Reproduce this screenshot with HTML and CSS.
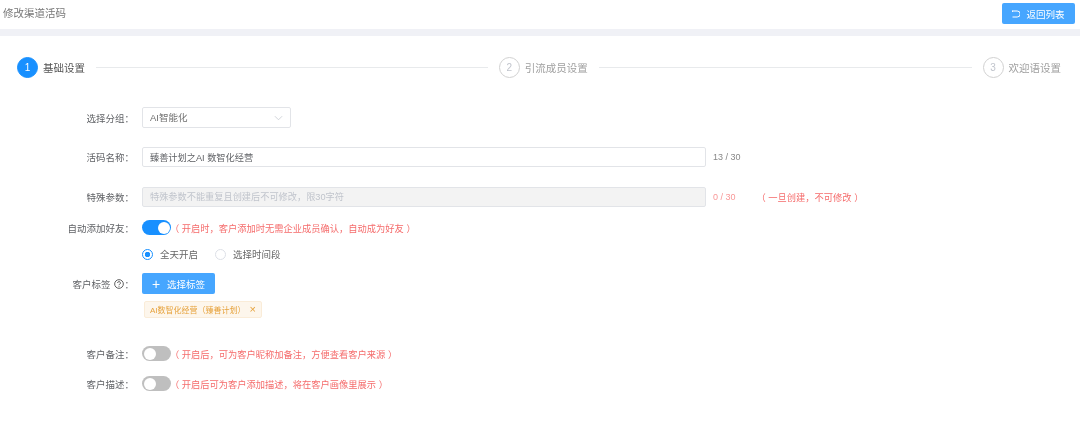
FILE: index.html
```html
<!doctype html>
<html lang="zh-CN">
  <head>
    <meta charset="UTF-8" />
    <title>修改渠道活码</title>
    <link rel="stylesheet" href="styles.css">
  </head>
  <body>
    <header class="topbar">
      <span class="page-title">修改渠道活码</span>
      <button class="btn btn-back">
        <svg class="icon-back" viewBox="0 0 8 8"><path d="M.5 .5v1.4M.5 1h4.7a2.6 2.6 0 0 1 0 6H.5" /></svg>
        返回列表
      </button>
    </header>

    <main class="panel">
      <div class="steps">
        <div class="step active"><span class="step-num">1</span><span class="step-label">基础设置</span></div>
        <div class="step-line line-first"></div>
        <div class="step"><span class="step-num">2</span><span class="step-label">引流成员设置</span></div>
        <div class="step-line line-second"></div>
        <div class="step"><span class="step-num">3</span><span class="step-label">欢迎语设置</span></div>
      </div>

      <form class="form">
        <div class="row row-group">
          <label class="label">选择分组：</label>
          <div class="select">AI智能化
            <svg class="chevron" viewBox="0 0 10 6"><path d="M1 1l4 4 4-4" /></svg>
          </div>
        </div>

        <div class="row row-name">
          <label class="label">活码名称：</label>
          <input class="input" type="text" value="臻善计划之AI 数智化经营" />
          <span class="count">13 / 30</span>
        </div>

        <div class="row row-param">
          <label class="label">特殊参数：</label>
          <input class="input" type="text" disabled placeholder="特殊参数不能重复且创建后不可修改，限30字符" />
          <span class="count count-red">0 / 30</span>
          <span class="hint hint-once">（ 一旦创建，不可修改 ）</span>
        </div>

        <div class="row row-auto">
          <label class="label">自动添加好友：</label>
          <span class="switch on"></span>
          <span class="hint">（ 开启时，客户添加时无需企业成员确认，自动成为好友 ）</span>
        </div>

        <div class="row row-radio">
          <span class="label"></span>
          <span class="radio checked"></span><span class="radio-text">全天开启</span>
          <span class="radio radio-second"></span><span class="radio-text">选择时间段</span>
        </div>

        <div class="row row-tags">
          <label class="label">客户标签
            <svg class="icon-help" viewBox="0 0 12 12">
              <circle cx="6" cy="6" r="5.2" />
              <path d="M4.3 4.8a1.7 1.7 0 1 1 2.5 1.5c-.6.3-.8.6-.8 1.1" />
              <path d="M6 8.3v1" />
            </svg>：</label>
          <button class="btn btn-tag" type="button"><span class="plus">+</span>选择标签</button>
        </div>

        <div class="row row-taglist">
          <span class="label"></span>
          <span class="tag">AI数智化经营（臻善计划）<span class="tag-close">×</span></span>
        </div>

        <div class="row row-remark">
          <label class="label">客户备注：</label>
          <span class="switch"></span>
          <span class="hint">（ 开启后，可为客户昵称加备注，方便查看客户来源 ）</span>
        </div>

        <div class="row row-desc">
          <label class="label">客户描述：</label>
          <span class="switch"></span>
          <span class="hint">（ 开启后可为客户添加描述，将在客户画像里展示 ）</span>
        </div>
      </form>
    </main>
  </body>
</html>
```

FILE: styles.css
```css
* {
  box-sizing: border-box;
}

html,
body {
  height: 100%;
}

body {
  margin: 0;
  background: #fff;
  color: #606266;
  font-family: "Liberation Sans", "Noto Sans CJK SC", sans-serif;
  font-size: 10px;
  overflow: hidden;
  filter: blur(0.35px);
}

.topbar {
  display: flex;
  align-items: flex-start;
  justify-content: space-between;
  height: 36px;
  padding: 3px 5px 0 3px;
  border-bottom: 7px solid #f0f1f6;
}

.page-title {
  font-size: 10.5px;
  line-height: 20px;
  color: #777;
}

.btn {
  display: inline-flex;
  align-items: center;
  justify-content: center;
  flex: none;
  width: 73px;
  height: 21px;
  padding: 0;
  border: 0;
  border-radius: 2px;
  background: #46a6ff;
  color: #fff;
  font-family: inherit;
  font-size: 9.5px;
  white-space: nowrap;
}

.icon-back {
  width: 8px;
  height: 8px;
  margin-right: 6px;
  fill: none;
  stroke: #fff;
  stroke-width: 1;
}

.steps {
  display: flex;
  align-items: center;
  padding: 21px 19px 0 17px;
}

.step {
  display: flex;
  align-items: center;
  color: #a0a0a0;
  font-size: 10.5px;
}

.step-num {
  display: flex;
  align-items: center;
  justify-content: center;
  width: 21px;
  height: 21px;
  margin-right: 5px;
  border: 1px solid #d0d0d0;
  border-radius: 50%;
  color: #c0c4cc;
  font-size: 10px;
}

.step.active {
  color: #555;
}

.step.active .step-num {
  border-color: #1890ff;
  background: #1890ff;
  color: #fff;
}

.step-line {
  height: 1px;
  margin: 0 11px;
  background: #e8eaec;
}

.line-first {
  flex: 391;
}

.line-second {
  flex: 372;
}

.form {
  padding-top: 29px;
}

.row {
  display: flex;
  align-items: center;
}

.label {
  display: flex;
  align-items: center;
  justify-content: flex-end;
  flex: none;
  width: 134px;
  margin-right: 8px;
  color: #606266;
  font-size: 9.5px;
}

.row-group { height: 21px; }
.row-name { height: 20px; margin-top: 19px; }
.row-param { height: 20px; margin-top: 20px; }
.row-auto { height: 15px; margin-top: 13px; }
.row-radio { height: 16px; margin-top: 11px; }
.row-tags { height: 21px; margin-top: 11px; }
.row-taglist { height: 17px; margin-top: 7px; }
.row-remark { height: 15px; margin-top: 28px; }
.row-desc { height: 15px; margin-top: 15px; }

.row-taglist .label {
  margin-right: 10px;
}

.select {
  position: relative;
  width: 149px;
  height: 21px;
  padding-left: 7px;
  border: 1px solid #e2e4e8;
  border-radius: 2px;
  color: #707070;
  font-size: 9.5px;
  line-height: 19px;
}

.chevron {
  position: absolute;
  top: 7px;
  right: 7px;
  width: 9px;
  height: 6px;
  fill: none;
  stroke: #c0c4cc;
  stroke-width: 0.8;
}

.input {
  width: 564px;
  height: 20px;
  padding: 0 7px;
  border: 1px solid #e2e4e8;
  border-radius: 2px;
  background: #fff;
  color: #606266;
  font-family: inherit;
  font-size: 9.2px;
  outline: none;
}

.input:disabled {
  background: #f3f3f3;
}

.input::placeholder {
  color: #c0c4cc;
}

.count {
  margin-left: 7px;
  color: #888;
  font-size: 9px;
}

.count-red {
  color: #f89898;
}

.hint {
  margin-left: -1px;
  color: #f56c6c;
  font-size: 9.25px;
}

.hint-once {
  margin-left: 21px;
}

.switch {
  position: relative;
  flex: none;
  width: 29px;
  height: 15px;
  border-radius: 8px;
  background: #bfbfbf;
}

.switch::after {
  content: "";
  position: absolute;
  top: 1.5px;
  left: 1.5px;
  width: 12px;
  height: 12px;
  border-radius: 50%;
  background: #fff;
}

.switch.on {
  background: #1890ff;
}

.switch.on::after {
  left: 15.5px;
}

.radio {
  flex: none;
  width: 11px;
  height: 11px;
  border: 1px solid #dcdfe6;
  border-radius: 50%;
}

.radio.checked {
  border-color: #1890ff;
  background: radial-gradient(circle, #1890ff 0 2.5px, #fff 3px);
}

.radio-second {
  margin-left: 17px;
}

.radio-text {
  margin-left: 7px;
  color: #666;
  font-size: 9.5px;
}

.plus {
  margin-right: 7px;
  font-size: 14px;
  line-height: 14px;
}

.icon-help {
  width: 10px;
  height: 10px;
  margin-left: 4px;
  fill: none;
  stroke: #505050;
  stroke-width: 1.1;
}

.tag {
  display: flex;
  align-items: center;
  height: 17px;
  padding: 0 5px;
  border: 1px solid #faecd8;
  border-radius: 2px;
  background: #fdf6ec;
  color: #e6a23c;
  font-size: 8px;
}

.tag-close {
  margin-left: 4px;
  font-size: 11px;
  line-height: 11px;
}
```
